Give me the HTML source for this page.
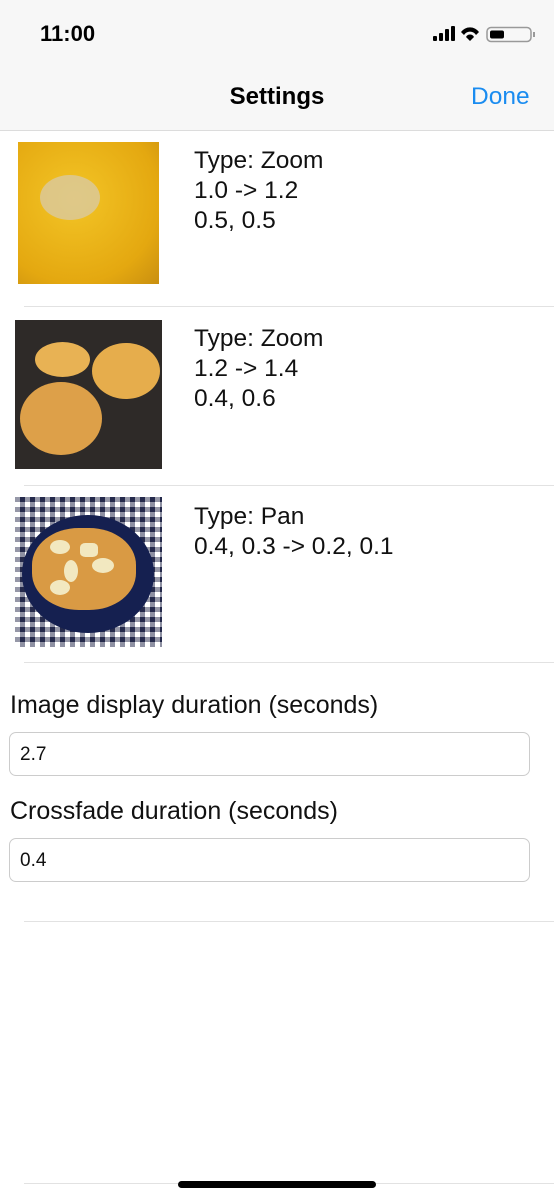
<html><head><style>
body{margin:0;width:554px;height:1200px;background:#fff;font-family:"Liberation Sans",sans-serif;position:relative;overflow:hidden}
.a{position:absolute}
.t{position:absolute;left:194px;font-size:24.5px;line-height:30px;color:#111}
.sep{position:absolute;left:24px;right:0;height:1px;background:#e2e2e2}
.in{position:absolute;left:9px;width:521px;height:44px;border:1px solid #ccc;border-radius:7px;font-size:19px;line-height:44px;padding-left:10px;box-sizing:border-box;color:#111}
.lb{position:absolute;left:10px;font-size:25px;color:#111}
</style></head><body>
<div class="a" style="left:0;top:0;width:554px;height:130px;background:#f7f7f7;border-bottom:1px solid #dcdcdc"></div>
<div class="a" style="left:40px;top:21px;font-size:22px;font-weight:bold;color:#000">11:00</div>
<svg class="a" style="left:433px;top:26px" width="104" height="18">
<rect x="0" y="10" width="4" height="5" rx="1"/><rect x="6" y="7" width="4" height="8" rx="1"/><rect x="12" y="3" width="4" height="12" rx="1"/><rect x="18" y="0" width="4" height="15" rx="1"/>
<path d="M28 6 A11 11 0 0 1 46 6 L43 9 A7 7 0 0 0 31 9 Z M33 11 A4.5 4.5 0 0 1 41 11 L37 15 Z"/>
<rect x="54" y="1.5" width="44" height="14" rx="4" fill="none" stroke="#999" stroke-width="1.5"/><rect x="57" y="4.5" width="14" height="8" rx="2"/><rect x="100" y="6" width="2" height="5" fill="#999"/>
</svg>
<div class="a" style="left:0;width:554px;top:83px;text-align:center;font-size:24px;font-weight:bold">Settings</div>
<div class="a" style="left:471px;top:83px;font-size:24.5px;color:#1a8cf0">Done</div>

<div class="a" style="left:18px;top:142px;width:141px;height:142px;background:radial-gradient(circle at 40% 40%,#f3c526,#e4a810 70%,#c98f10)"></div>
<div class="a" style="left:40px;top:175px;width:60px;height:45px;border-radius:50%;background:#d9c9a0;opacity:.8"></div>
<div class="t" style="top:146px">Type: Zoom<br>1.0 -&gt; 1.2<br>0.5, 0.5</div>
<div class="sep" style="top:306px"></div>

<div class="a" style="left:15px;top:320px;width:147px;height:149px;background:#2e2a28"></div>
<div class="a" style="left:35px;top:342px;width:55px;height:35px;border-radius:50%;background:#e8b254"></div>
<div class="a" style="left:92px;top:343px;width:68px;height:56px;border-radius:50%;background:#e6ad4c"></div>
<div class="a" style="left:20px;top:382px;width:82px;height:73px;border-radius:50%;background:#dda049"></div>
<div class="t" style="top:324px">Type: Zoom<br>1.2 -&gt; 1.4<br>0.4, 0.6</div>
<div class="sep" style="top:485px"></div>

<div class="a" style="left:15px;top:497px;width:147px;height:150px;background:repeating-linear-gradient(0deg,#fff 0 5px,#2c3150 5px 10px),#fff;background-blend-mode:multiply"></div>
<div class="a" style="left:15px;top:497px;width:147px;height:150px;background:repeating-linear-gradient(90deg,rgba(255,255,255,.5) 0 5px,rgba(30,35,70,.5) 5px 10px)"></div>
<div class="a" style="left:22px;top:515px;width:132px;height:118px;border-radius:50%;background:#152050"></div>
<div class="a" style="left:32px;top:528px;width:104px;height:82px;border-radius:45%;background:#d99a44"></div>
<div class="a" style="left:50px;top:540px;width:20px;height:14px;border-radius:50%;background:#f2e8c0"></div>
<div class="a" style="left:80px;top:543px;width:18px;height:14px;border-radius:30%;background:#f2e8c0"></div>
<div class="a" style="left:92px;top:558px;width:22px;height:15px;border-radius:50%;background:#f2e8c0"></div>
<div class="a" style="left:50px;top:580px;width:20px;height:15px;border-radius:50%;background:#f2e8c0"></div>
<div class="a" style="left:64px;top:560px;width:14px;height:22px;border-radius:50%;background:#f2e8c0"></div>
<div class="t" style="top:502px">Type: Pan<br>0.4, 0.3 -&gt; 0.2, 0.1</div>
<div class="sep" style="top:662px"></div>

<div class="lb" style="top:691px">Image display duration (seconds)</div>
<div class="in" style="top:732px">2.7</div>
<div class="lb" style="top:797px">Crossfade duration (seconds)</div>
<div class="in" style="top:838px">0.4</div>
<div class="sep" style="top:921px"></div>
<div class="sep" style="top:1183px"></div>
<div class="a" style="left:178px;top:1181px;width:198px;height:7px;border-radius:4px;background:#000"></div>
</body></html>
